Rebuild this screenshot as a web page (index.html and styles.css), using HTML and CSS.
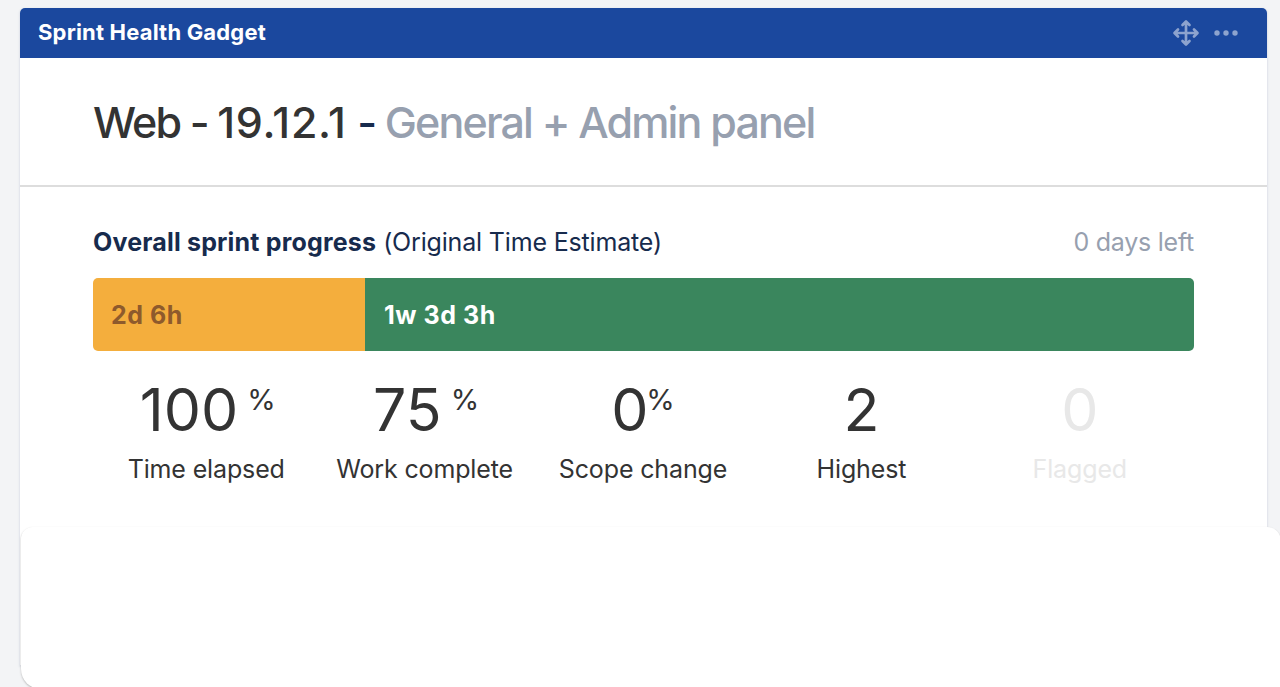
FILE: index.html
```
<!DOCTYPE html>
<html lang="en">
<head>
    <meta charset="UTF-8">
    <meta name="viewport" content="width=device-width, initial-scale=1.0">
    <title>Sprint Health Gadget</title>
    <link rel="stylesheet" href="styles.css">
</head>
<body>
    <div class="gadget">
        <div class="gadget-header">
            <h3><span>Sprint Health Gadget</span></h3>
            <div class="actions">
                <svg class="move" width="28" height="28" viewBox="0 0 28 28">
                    <path d="M14 3v22M3 14h22M10.5 6l3.5-3.5 3.5 3.5M10.5 22l3.5 3.5 3.5-3.5M6 10.5l-3.5 3.5 3.5 3.5M22 10.5l3.5 3.5-3.5 3.5"/>
                </svg>
                <svg class="more" width="26" height="8" viewBox="0 0 26 8">
                    <circle cx="4" cy="4" r="2.7"/>
                    <circle cx="13" cy="4" r="2.7"/>
                    <circle cx="22" cy="4" r="2.7"/>
                </svg>
            </div>
        </div>
        <div class="sprint-name">
            <h2><span class="name">Web - <span class="version">19.12.1</span></span> <span class="dash">-</span> <span class="goal">General + Admin panel</span></h2>
        </div>
        <div class="content">
            <div class="progress-title">
                <div><b>Overall sprint progress</b> <span class="estimate">(Original Time Estimate)</span></div>
                <span class="days-left">0 days left</span>
            </div>
            <div class="bar">
                <div class="todo"><span>2d 6h</span></div>
                <div class="done"><span>1w 3d 3h</span></div>
            </div>
            <div class="stats">
                <div class="stat">
                    <div class="value spaced"><span>100</span><sup>%</sup></div>
                    <div class="label"><span>Time elapsed</span></div>
                </div>
                <div class="stat">
                    <div class="value spaced"><span>75</span><sup>%</sup></div>
                    <div class="label"><span>Work complete</span></div>
                </div>
                <div class="stat">
                    <div class="value"><span>0</span><sup>%</sup></div>
                    <div class="label"><span>Scope change</span></div>
                </div>
                <div class="stat">
                    <div class="value"><span>2</span></div>
                    <div class="label"><span>Highest</span></div>
                </div>
                <div class="stat empty">
                    <div class="value"><span>0</span></div>
                    <div class="label"><span>Flagged</span></div>
                </div>
            </div>
        </div>
    </div>
    <div class="panel"></div>
</body>
</html>
```
FILE: styles.css
```
*{
    margin: 0;
    padding: 0;
    box-sizing: border-box;
}
body{
    height: 687px;
    padding-top: 8px;
    overflow: hidden;
    font-family: Inter, "Liberation Sans", sans-serif;
    background-color: #f3f4f6;
    color: #333333;
}
.gadget{
    width: 1247px;
    height: 657px;
    margin-left: 20px;
    background-color: white;
    border-radius: 5px 5px 0 0;
    box-shadow: 0 1px 2px 1px #dfe2ea;
}
.gadget-header{
    display: flex;
    justify-content: space-between;
    align-items: center;
    height: 50px;
    padding: 0 28px 0 18px;
    background-color: #1b489e;
    border-radius: 5px 5px 0 0;
    color: white;
}
.gadget-header h3{
    font-size: 22px;
    line-height: 48px;
    padding-bottom: 2px;
    font-weight: 700;
    letter-spacing: 0.18px;
}
.actions{
    display: flex;
    align-items: center;
    gap: 13px;
}
.move{
    fill: none;
    stroke: #8da3ce;
    stroke-width: 2.7;
    stroke-linecap: round;
    stroke-linejoin: round;
}
.more{
    fill: #8da3ce;
}
.sprint-name{
    height: 129px;
    padding: 0 73px;
    border-bottom: 2px solid #dddddd;
}
.sprint-name h2{
    font-size: 43px;
    line-height: 129px;
    font-weight: 550;
    letter-spacing: -1.9px;
    white-space: nowrap;
}
.version{
    letter-spacing: 0.7px;
}
.dash{
    margin-left: 1px;
    color: #172b4d;
}
.goal{
    letter-spacing: -1.84px;
    color: #97a0af;
}
.content{
    padding: 39px 73px 0;
}
.progress-title{
    display: flex;
    justify-content: space-between;
    font-size: 25px;
    line-height: 32px;
    color: #172b4d;
}
.progress-title b{
    letter-spacing: 0.18px;
}
.estimate{
    letter-spacing: -0.17px;
}
.progress-title .days-left{
    letter-spacing: -0.25px;
    color: #97a0af;
}
.bar{
    display: flex;
    height: 73px;
    margin-top: 20px;
    border-radius: 5px;
    overflow: hidden;
    font-size: 25px;
    line-height: 74px;
    font-weight: 700;
    letter-spacing: 0.55px;
}
.todo{
    width: 272px;
    padding-left: 18px;
    background-color: #f4ae3d;
    color: #8e5a2c;
}
.done{
    flex: 1;
    padding-left: 19px;
    background-color: #3a865d;
    color: white;
}
.stats{
    display: grid;
    grid-template-columns: repeat(5, 1fr);
    margin: 24px 5px 0 4px;
    text-align: center;
}
.value{
    display: flex;
    justify-content: center;
    height: 70px;
    font-size: 59px;
    line-height: 70px;
}
.value sup{
    font-size: 29px;
    line-height: 50px;
    margin-left: -2px;
}
.value.spaced{
    padding-left: 3px;
}
.value.spaced sup{
    margin-left: 9px;
}
.label{
    font-size: 25px;
    line-height: 48px;
    letter-spacing: -0.14px;
}
.empty{
    color: #e8e8e8;
}
.panel{
    position: relative;
    width: 1260px;
    height: 162px;
    margin: -138px 0 0 21px;
    background-color: white;
    border-radius: 12px 14px 0 20px;
    box-shadow: 0 1px 2px #b8b8b8;
}
```
